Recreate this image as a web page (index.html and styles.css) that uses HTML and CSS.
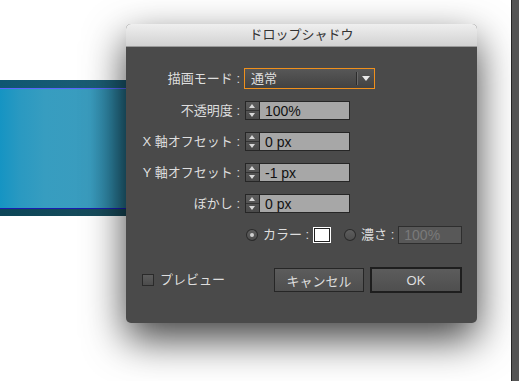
FILE: index.html
```html
<!DOCTYPE html>
<html lang="ja">
<head>
    <meta charset="UTF-8">
    <title>ドロップシャドウ</title>
    <link rel="stylesheet" href="styles.css">
</head>
<body>
    <div class="screen">
        <div class="canvas">
            <div class="band">
                <div class="band-edge top"></div>
                <div class="band-line"></div>
                <div class="band-fill"></div>
                <div class="band-line dark"></div>
                <div class="band-edge bottom"></div>
            </div>
        </div>
        <div class="side-panel"></div>
    </div>

    <div class="dialog">
        <div class="dialog-title">ドロップシャドウ</div>
        <div class="dialog-body">
            <div class="fields">
                <span class="field-label">描画モード :</span>
                <div class="select">
                    <span class="select-value">通常</span>
                    <span class="select-arrow"></span>
                </div>

                <span class="field-label">不透明度 :</span>
                <div class="number-field">
                    <span class="spinner"><i class="up"></i><i class="down"></i></span>
                    <span class="number-input">100%</span>
                </div>

                <span class="field-label">X 軸オフセット :</span>
                <div class="number-field">
                    <span class="spinner"><i class="up"></i><i class="down"></i></span>
                    <span class="number-input">0 px</span>
                </div>

                <span class="field-label">Y 軸オフセット :</span>
                <div class="number-field">
                    <span class="spinner"><i class="up"></i><i class="down"></i></span>
                    <span class="number-input">-1 px</span>
                </div>

                <span class="field-label">ぼかし :</span>
                <div class="number-field">
                    <span class="spinner"><i class="up"></i><i class="down"></i></span>
                    <span class="number-input">0 px</span>
                </div>
            </div>

            <div class="color-row">
                <span class="radio checked"></span>
                <span class="option-label">カラー :</span>
                <span class="swatch"></span>
                <span class="radio second"></span>
                <span class="option-label">濃さ :</span>
                <span class="number-input disabled">100%</span>
            </div>

            <div class="footer">
                <label class="preview">
                    <span class="checkbox"></span>
                    プレビュー
                </label>
                <div class="buttons">
                    <button class="btn">キャンセル</button>
                    <button class="btn default">OK</button>
                </div>
            </div>
        </div>
    </div>
</body>
</html>
```

FILE: styles.css
```css
:root {
    --panel: #4a4a4a;
    --label: #dedede;
    --edge: #262626;
    --field: #a7a7a7;
    --accent: #f0901c;
}

body {
    margin: 0;
    background: #fff;
    font-family: 'Liberation Sans', 'Noto Sans CJK JP', sans-serif;
    font-size: 13px;
    overflow: hidden;
}

.screen {
    display: flex;
    height: 381px;
}

.canvas {
    flex: 1;
    padding-top: 80px;
    background: #fff;
}

.side-panel {
    width: 7px;
    background: #555;
    border-left: 1px solid #262626;
}

/* selected blue shape on the artboard */
.band {
    width: 200px;
}

.band-edge {
    background: linear-gradient(to right, #0f5672, #1b5d74 50%, #185066 85%, #123f50);
}

.band-edge.top {
    height: 8px;
}

.band-edge.bottom {
    height: 7px;
    background: linear-gradient(to right, #0c4658, #174c5c 50%, #143f4d 85%, #10323e);
}

.band-line {
    height: 1px;
    background: #5a64ff;
}

.band-line.dark {
    background: #1b1bb0;
}

.band-fill {
    height: 119px;
    background: linear-gradient(to right, #1594c3 0, #2a99c1 20px, #379dc0 45px, #3a9cbe 90px, #2f87a6 108px, #236b84 126px, #236b84);
}

/* dialog */
.dialog {
    position: absolute;
    left: 126px;
    top: 24px;
    width: 351px;
    height: 299px;
    background: var(--panel);
    border-radius: 5px;
    box-shadow: 0 16px 40px rgba(0, 0, 0, 0.75);
    display: flex;
    flex-direction: column;
}

.dialog-title {
    height: 22px;
    line-height: 21px;
    text-align: center;
    color: #333;
    background: linear-gradient(#efefef, #d2d2d2);
    border-radius: 5px 5px 0 0;
    border-bottom: 1px solid #9a9a9a;
}

.dialog-body {
    flex: 1;
    padding: 21px 15px 0 0;
    display: flex;
    flex-direction: column;
}

.fields {
    display: grid;
    grid-template-columns: 114px 1fr;
    column-gap: 4px;
    row-gap: 12px;
    align-items: center;
}

.field-label {
    color: var(--label);
    text-align: right;
    white-space: nowrap;
    line-height: 16px;
}

.select {
    width: 129px;
    height: 19px;
    border: 1px solid var(--accent);
    background: linear-gradient(#575757, #424242);
    display: flex;
    align-items: center;
}

.select-value {
    flex: 1;
    color: var(--label);
    padding-left: 6px;
    line-height: 16px;
}

.select-arrow {
    width: 17px;
    height: 13px;
    border-left: 1px solid #2c2c2c;
    box-shadow: inset 1px 0 0 #6a6a6a;
    position: relative;
}

.select-arrow::after {
    content: "";
    position: absolute;
    left: 5px;
    top: 4px;
    border-left: 4px solid transparent;
    border-right: 4px solid transparent;
    border-top: 5px solid #e8e8e8;
}

.number-field {
    display: flex;
    height: 19px;
    margin-left: 1px;
}

.spinner {
    width: 13px;
    border: 1px solid var(--edge);
    border-right: 0;
    background: linear-gradient(#5c5c5c, #4a4a4a);
    display: flex;
    flex-direction: column;
}

.spinner i {
    flex: 1;
    position: relative;
}

.spinner i.up {
    border-bottom: 1px solid #333;
}

.spinner i::after {
    content: "";
    position: absolute;
    left: 3px;
    border-left: 3px solid transparent;
    border-right: 3px solid transparent;
}

.spinner i.up::after {
    top: 2px;
    border-bottom: 4px solid #d8d8d8;
}

.spinner i.down::after {
    top: 2px;
    border-top: 4px solid #d8d8d8;
}

.number-input {
    width: 84px;
    height: 17px;
    border: 1px solid var(--edge);
    background: var(--field);
    color: #111;
    padding-left: 5px;
    line-height: 18px;
    font-size: 14px;
}

.color-row {
    display: flex;
    align-items: center;
    margin: 13px 0 0 120px;
    height: 17px;
    color: var(--label);
}

.radio {
    width: 10px;
    height: 10px;
    border-radius: 50%;
    border: 1px solid #2a2a2a;
    background: linear-gradient(#5e5e5e, #4e4e4e);
    position: relative;
    margin-right: 5px;
}

.radio.checked::after {
    content: "";
    position: absolute;
    left: 3px;
    top: 3px;
    width: 4px;
    height: 4px;
    border-radius: 50%;
    background: #d0d0d0;
}

.radio.second {
    margin-left: 13px;
}

.option-label {
    white-space: nowrap;
    line-height: 16px;
    margin-right: 4px;
}

.swatch {
    width: 16px;
    height: 14px;
    background: #fff;
    border: 1px solid #fff;
    box-shadow: inset 0 0 0 1px #222;
}

.number-input.disabled {
    width: 57px;
    height: 16px;
    line-height: 17px;
    background: #585858;
    color: #7a7a7a;
    border-color: #2e2e2e;
}

.footer {
    display: flex;
    align-items: center;
    justify-content: space-between;
    margin-top: 24px;
    padding-left: 16px;
}

.preview {
    display: flex;
    align-items: center;
    gap: 6px;
    color: var(--label);
    line-height: 16px;
}

.checkbox {
    width: 10px;
    height: 10px;
    border: 1px solid #2a2a2a;
    background: linear-gradient(#5c5c5c, #4c4c4c);
}

.buttons {
    display: flex;
    align-items: center;
    gap: 6px;
}

.btn {
    font: inherit;
    color: var(--label);
    height: 24px;
    width: 90px;
    padding: 0;
    border: 1px solid #262626;
    background: linear-gradient(#5c5c5c, #4f4f4f);
    cursor: pointer;
}

.btn.default {
    width: 92px;
    height: 26px;
    border: 2px solid #1e1e1e;
}
```
